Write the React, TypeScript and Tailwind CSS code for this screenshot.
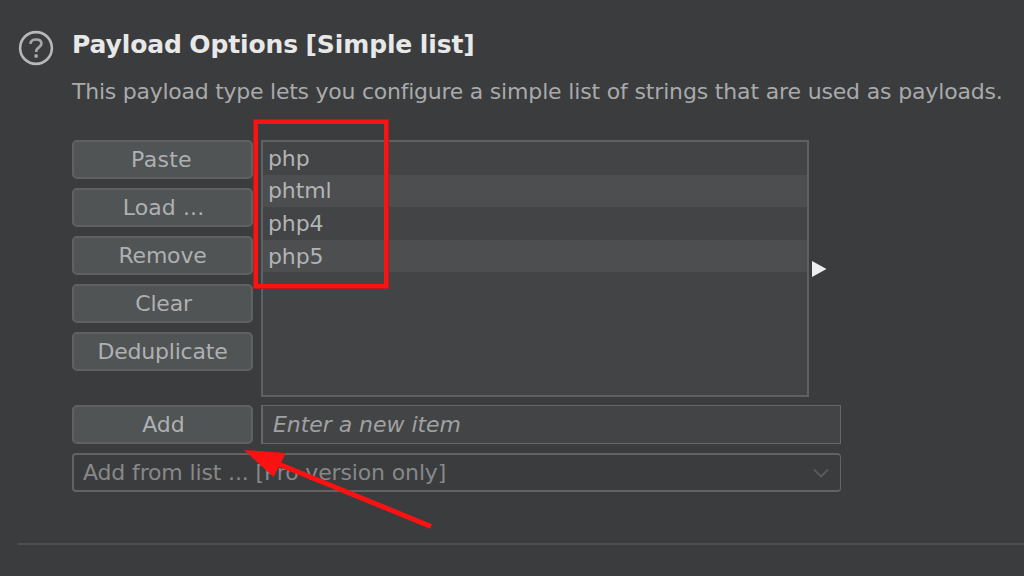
const actions = [
  { label: 'Paste', tracking: 'tracking-[0.3px] pr-[2px]' },
  { label: 'Load ...', tracking: 'tracking-[0.1px] pl-[2px]' },
  { label: 'Remove', tracking: 'tracking-[-0.2px]' },
  { label: 'Clear', tracking: 'tracking-[-0.2px] pl-[2px]' },
  { label: 'Deduplicate', tracking: 'tracking-[-0.2px]' },
];

const items = ['php', 'phtml', 'php4', 'php5'];

function ActionButton({ label, tracking = '' }: { label: string; tracking?: string }) {
  return (
    <button
      className={`h-[39px] w-[181px] shrink-0 rounded-[5px] border-2 border-[#5f6162] bg-[#505455] text-center leading-[35px] text-[#aeb0b1] ${tracking}`}
    >
      {label}
    </button>
  );
}

function HelpIcon() {
  return (
    <svg className="mt-[30px] size-9 shrink-0" viewBox="0 0 36 36" fill="none">
      <circle cx="18" cy="18" r="15.9" stroke="#b7b8b9" strokeWidth="2.6" />
      <path
        d="M12.4 13.8C12.7 10.9 15 9.5 18 9.5C21.2 9.5 23.4 11.1 23.4 13.6C23.4 15.8 21.9 16.8 20.3 17.9C18.8 18.9 18.1 19.7 18.1 22"
        stroke="#a5a6a7"
        strokeWidth="2.7"
      />
      <circle cx="18.1" cy="26" r="1.9" fill="#a5a6a7" />
    </svg>
  );
}

export default function App() {
  return (
    <main className="relative h-[576px] w-[1024px] overflow-hidden bg-[#3b3c3d] font-['DejaVu_Sans',sans-serif] text-[22px] text-[#b2b4b5]">
      <section className="flex pl-[18px]">
        <HelpIcon />
        <div className="flex flex-col pl-[18px]">
          <h1 className="mt-[29px] h-8 text-[25px] leading-8 font-bold tracking-[-0.12px] [word-spacing:-1px] whitespace-nowrap text-[#e8e8e9]">
            Payload Options [Simple list]
          </h1>
          <p className="mt-[17px] h-7 leading-7 tracking-[-0.16px] whitespace-nowrap text-[#a9aaab]">
            <span className="tracking-[-0.25px]">This payload type lets you configure a </span>
            simple list of strings that are used as payloads.
          </p>

          <div className="mt-[34px] flex gap-2">
            <div className="flex h-[257px] flex-col gap-[9px]">
              {actions.map((action) => (
                <ActionButton key={action.label} {...action} />
              ))}
            </div>
            <ul className="h-[257px] w-[548px] border-2 border-[#5f6061] bg-[#434445]">
              {items.map((item) => (
                <li
                  key={item}
                  className="h-[32.5px] pl-[5px] leading-[33px] tracking-[-0.1px] even:bg-[#4d4e4f] nth-2:leading-[32px]"
                >
                  {item}
                </li>
              ))}
            </ul>
            <svg className="mt-[120px] -ml-[5px] h-[18px] w-[15px]" viewBox="0 0 15 18">
              <path d="M0 1V17L14.5 9Z" fill="#eeeeef" />
            </svg>
          </div>

          <div className="mt-2 flex gap-2">
            <ActionButton label="Add" tracking="pl-[2px]" />
            <input
              className="h-[39px] w-[580px] border border-l-2 border-[#666768] bg-[#434445] pl-[10px] tracking-[-0.05px] italic outline-none placeholder:text-[#a0a1a2]"
              placeholder="Enter a new item"
            />
          </div>

          <div className="mt-[9px] flex h-[39px] w-[769px] items-center justify-between rounded-[4px] border-2 border-r-1 border-[#626362] pr-[11px] pl-[9px] text-[#878889]">
            <span className="leading-[35px] tracking-[-0.14px]">Add from list ... [Pro version only]</span>
            <svg className="h-[10px] w-4" viewBox="0 0 16 10" fill="none">
              <path d="M1 1.5L8 8.5L15 1.5" stroke="#5a5b5c" strokeWidth="1.8" />
            </svg>
          </div>
        </div>
      </section>
      <hr className="mt-[51px] ml-[18px] border-t-2 border-[#4d4e4f]" />

      <div className="absolute top-[119px] left-[253px] h-[170px] w-[136px] border-5 border-[#b61c1c]">
        <div className="-m-1 h-[168px] w-[134px] border-4 border-[#f91414]" />
      </div>
      <svg className="absolute top-[445px] left-[240px] h-[90px] w-[200px]" viewBox="240 445 200 90">
        <path d="M270 460.5L431 526.5" stroke="#fa1212" strokeWidth="5" />
        <path d="M244 450L286 453L273.5 477Z" fill="#fa1212" />
      </svg>
    </main>
  );
}
